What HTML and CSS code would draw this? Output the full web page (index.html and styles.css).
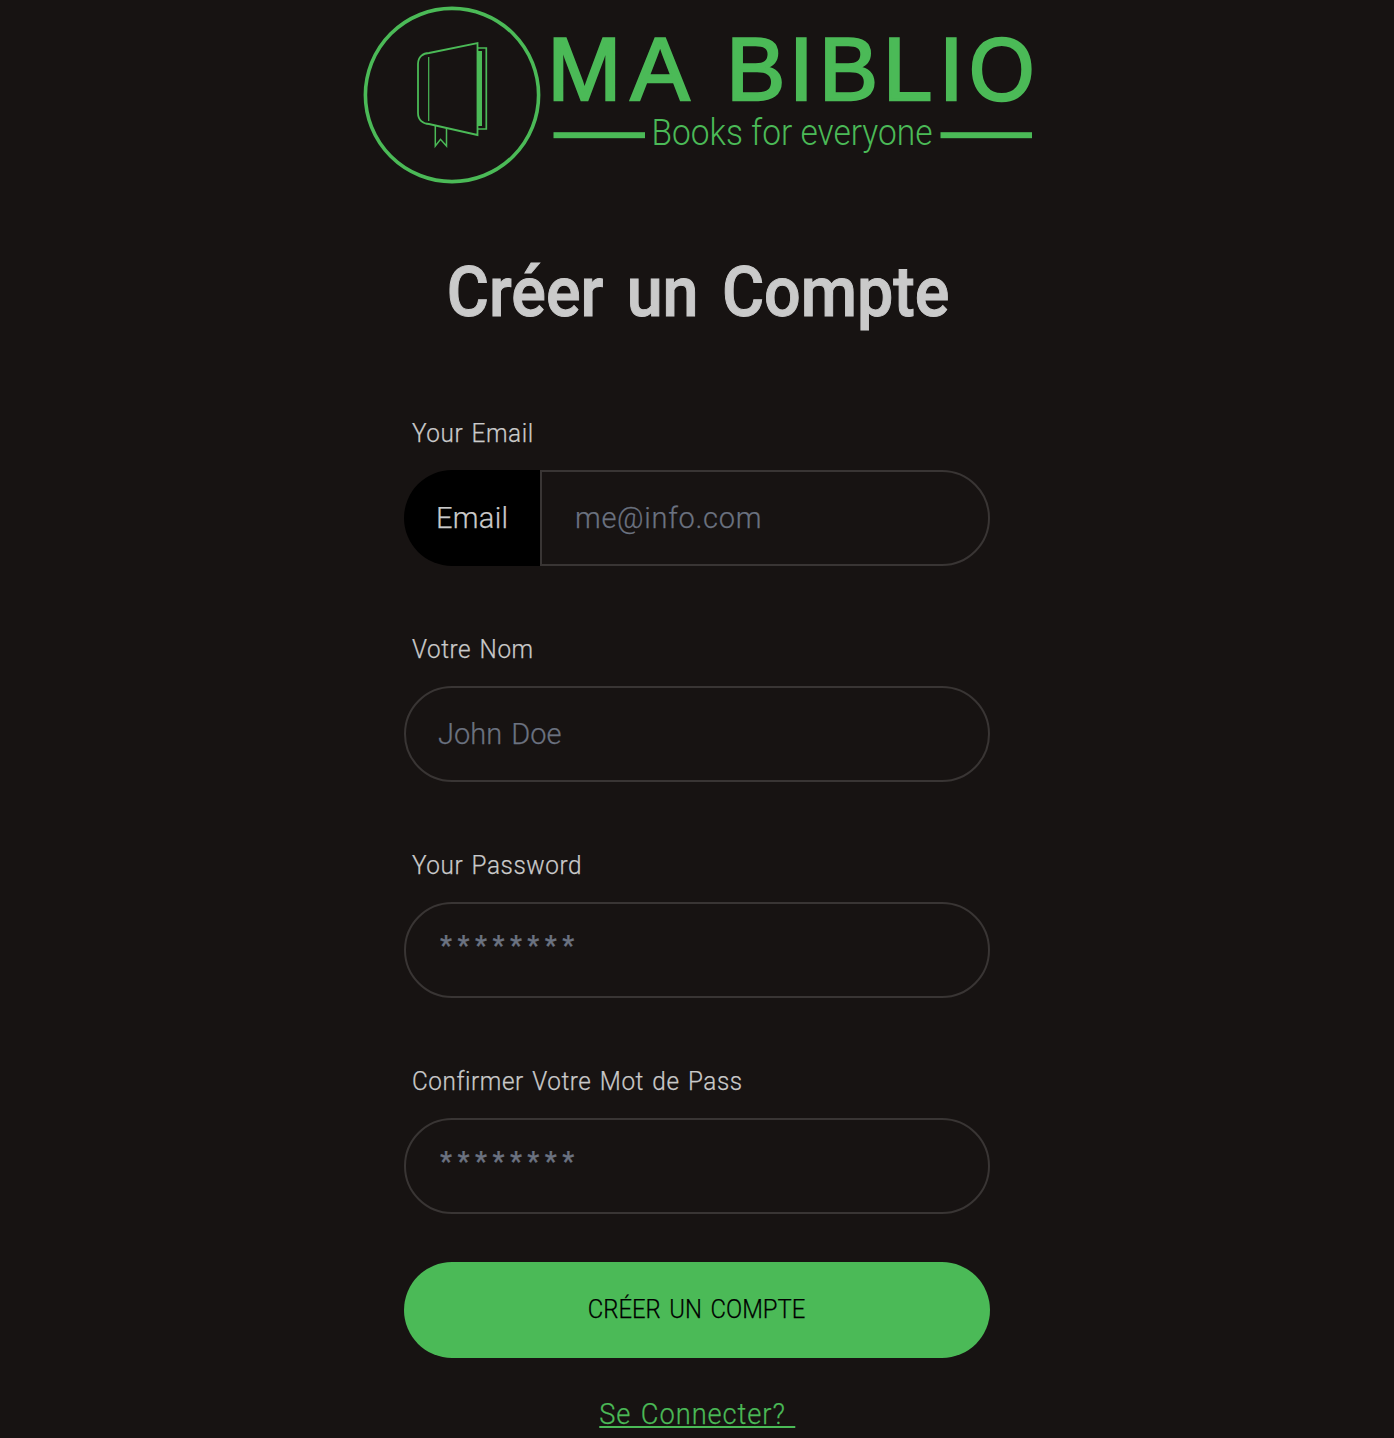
FILE: index.html
```html
<!DOCTYPE html>
<html lang="fr">
<head>
<meta charset="utf-8">
<title>Ma Biblio</title>
<link rel="stylesheet" href="styles.css">
</head>
<body>
<main class="page">
  <svg class="logo" viewBox="0 0 680 192" role="img" aria-label="Ma Biblio">
    <g fill="none" stroke="#4bba57">
      <circle cx="95" cy="95" r="86.6" stroke-width="3.6"/>
      <path stroke-width="1.8" d="M72 53 L120.5 43 V135 L72 124 C66 124 61 120 61 113 V64 C61 57 66 53 72 53 Z"/>
      <path stroke-width="1.2" d="M71.7 57 V121"/>
      <path stroke-width="1.7" d="M121 48 H129.3 V129 H121"/>
      <path stroke-width="1.5" d="M78.3 126 V146 L83.5 139.3 L89.5 146 V128"/>
    </g>
    <g fill="#4bba57">
      <rect x="120" y="51" width="5" height="75"/>
      <rect x="196.5" y="132.2" width="91.5" height="6"/>
      <rect x="583.5" y="132.2" width="91.5" height="6"/>
      <text class="logo-name" y="100.3"><tspan x="190.5">M</tspan><tspan x="273.5">A</tspan> <tspan x="369.2">B</tspan><tspan x="432">I</tspan><tspan x="462">B</tspan><tspan x="526">L</tspan><tspan x="582">I</tspan></text>
      <text class="logo-name" x="612" y="100.3" textLength="65.5" lengthAdjust="spacingAndGlyphs">O</text>
      <text class="logo-tag" x="294.5" y="145" textLength="281" lengthAdjust="spacingAndGlyphs">Books for everyone</text>
    </g>
  </svg>
  <h1 class="title">Créer un Compte</h1>
  <form class="form">
    <div class="field">
      <label class="label" for="email"><span class="narrow">Your Email</span></label>
      <div class="group">
        <span class="addon">Email</span>
        <input class="input" id="email" type="email" placeholder="me@info.com">
      </div>
    </div>
    <div class="field">
      <label class="label" for="name"><span class="narrow">Votre Nom</span></label>
      <input class="input" id="name" type="text" placeholder="John Doe">
    </div>
    <div class="field">
      <label class="label" for="password"><span class="narrow">Your Password</span></label>
      <input class="input stars" id="password" type="password" placeholder="********">
    </div>
    <div class="field">
      <label class="label" for="confirm"><span class="narrow">Confirmer Votre Mot de Pass</span></label>
      <input class="input stars" id="confirm" type="password" placeholder="********">
    </div>
    <button class="submit" type="button"><span class="submit-text">CRÉER UN COMPTE</span></button>
  </form>
  <a class="login" href="#">Se Connecter?&nbsp;</a>
</main>
</body>
</html>
```
FILE: styles.css
```css
* { box-sizing: border-box; }
html { height: 100%; overflow: hidden; background: #171312; }
body {
  margin: 0;
  background: #171312;
  color: #cacaca;
  font-family: Roboto, "Liberation Sans", sans-serif;
  font-weight: 300;
  -webkit-text-stroke: .25px currentColor;
}
.page { display: flex; flex-direction: column; align-items: center; }
.logo { display: block; width: 680px; height: 192px; margin-left: -1px; }
.logo-name { font-family: "Liberation Sans", sans-serif; font-size: 88.5px; font-weight: 400; stroke: #4bba57; stroke-width: 2.4; }
.logo-tag { font-size: 36px; font-weight: 300; }
.title {
  margin: 55px 0 0 3px;
  height: 91px;
  font-size: 71px;
  line-height: 90px;
  font-weight: 500;
  white-space: nowrap;
  word-spacing: 8px;
  transform: scaleX(.91);
  -webkit-text-stroke: 1px currentColor;
}
.form { display: flex; flex-direction: column; gap: 48px; width: 586px; margin-top: 60px; }
.field { display: flex; flex-direction: column; }
.label { height: 72px; padding: 15px 8px 17px; line-height: 40px; font-size: 26px; letter-spacing: .6px; word-spacing: 2px; }
.narrow { display: inline-block; transform: scaleX(.935); transform-origin: left; }
.group { display: flex; }
.input {
  flex: 1 1 auto;
  width: 100%;
  min-width: 0;
  min-height: 96px;
  padding: 0 32px;
  border: 2px solid #393534;
  border-radius: 48px;
  background: transparent;
  color: #cacaca;
  font: inherit;
  font-size: 29px;
  letter-spacing: 0;
  word-spacing: 2px;
}
.input::placeholder { color: #6b7280; opacity: 1; }
.stars { padding: 0 34px 9px; letter-spacing: 5.5px; font-size: 27px; font-weight: 500; }
.group .input { padding-left: 33px; border-radius: 0 48px 48px 0; letter-spacing: .7px; }
.addon {
  display: flex;
  align-items: center;
  flex: 0 0 136px;
  padding-left: 32px;
  border-radius: 48px 0 0 48px;
  background: #000;
  font-size: 29px;
  letter-spacing: .3px;
}
.submit {
  height: 96px;
  padding-bottom: 3px;
  border: 0;
  border-radius: 48px;
  background: #4bba57;
  color: #000;
  font: inherit;
  font-size: 26px;
  word-spacing: 3px;
}
.submit-text { display: inline-block; transform: scaleX(.918); }
.login { margin-top: 36px; line-height: 40px; font-size: 29px; letter-spacing: 1px; word-spacing: 2px; color: #4bba57; text-underline-offset: 2px; text-decoration-thickness: 2px; transform: scaleX(.94); }
```
